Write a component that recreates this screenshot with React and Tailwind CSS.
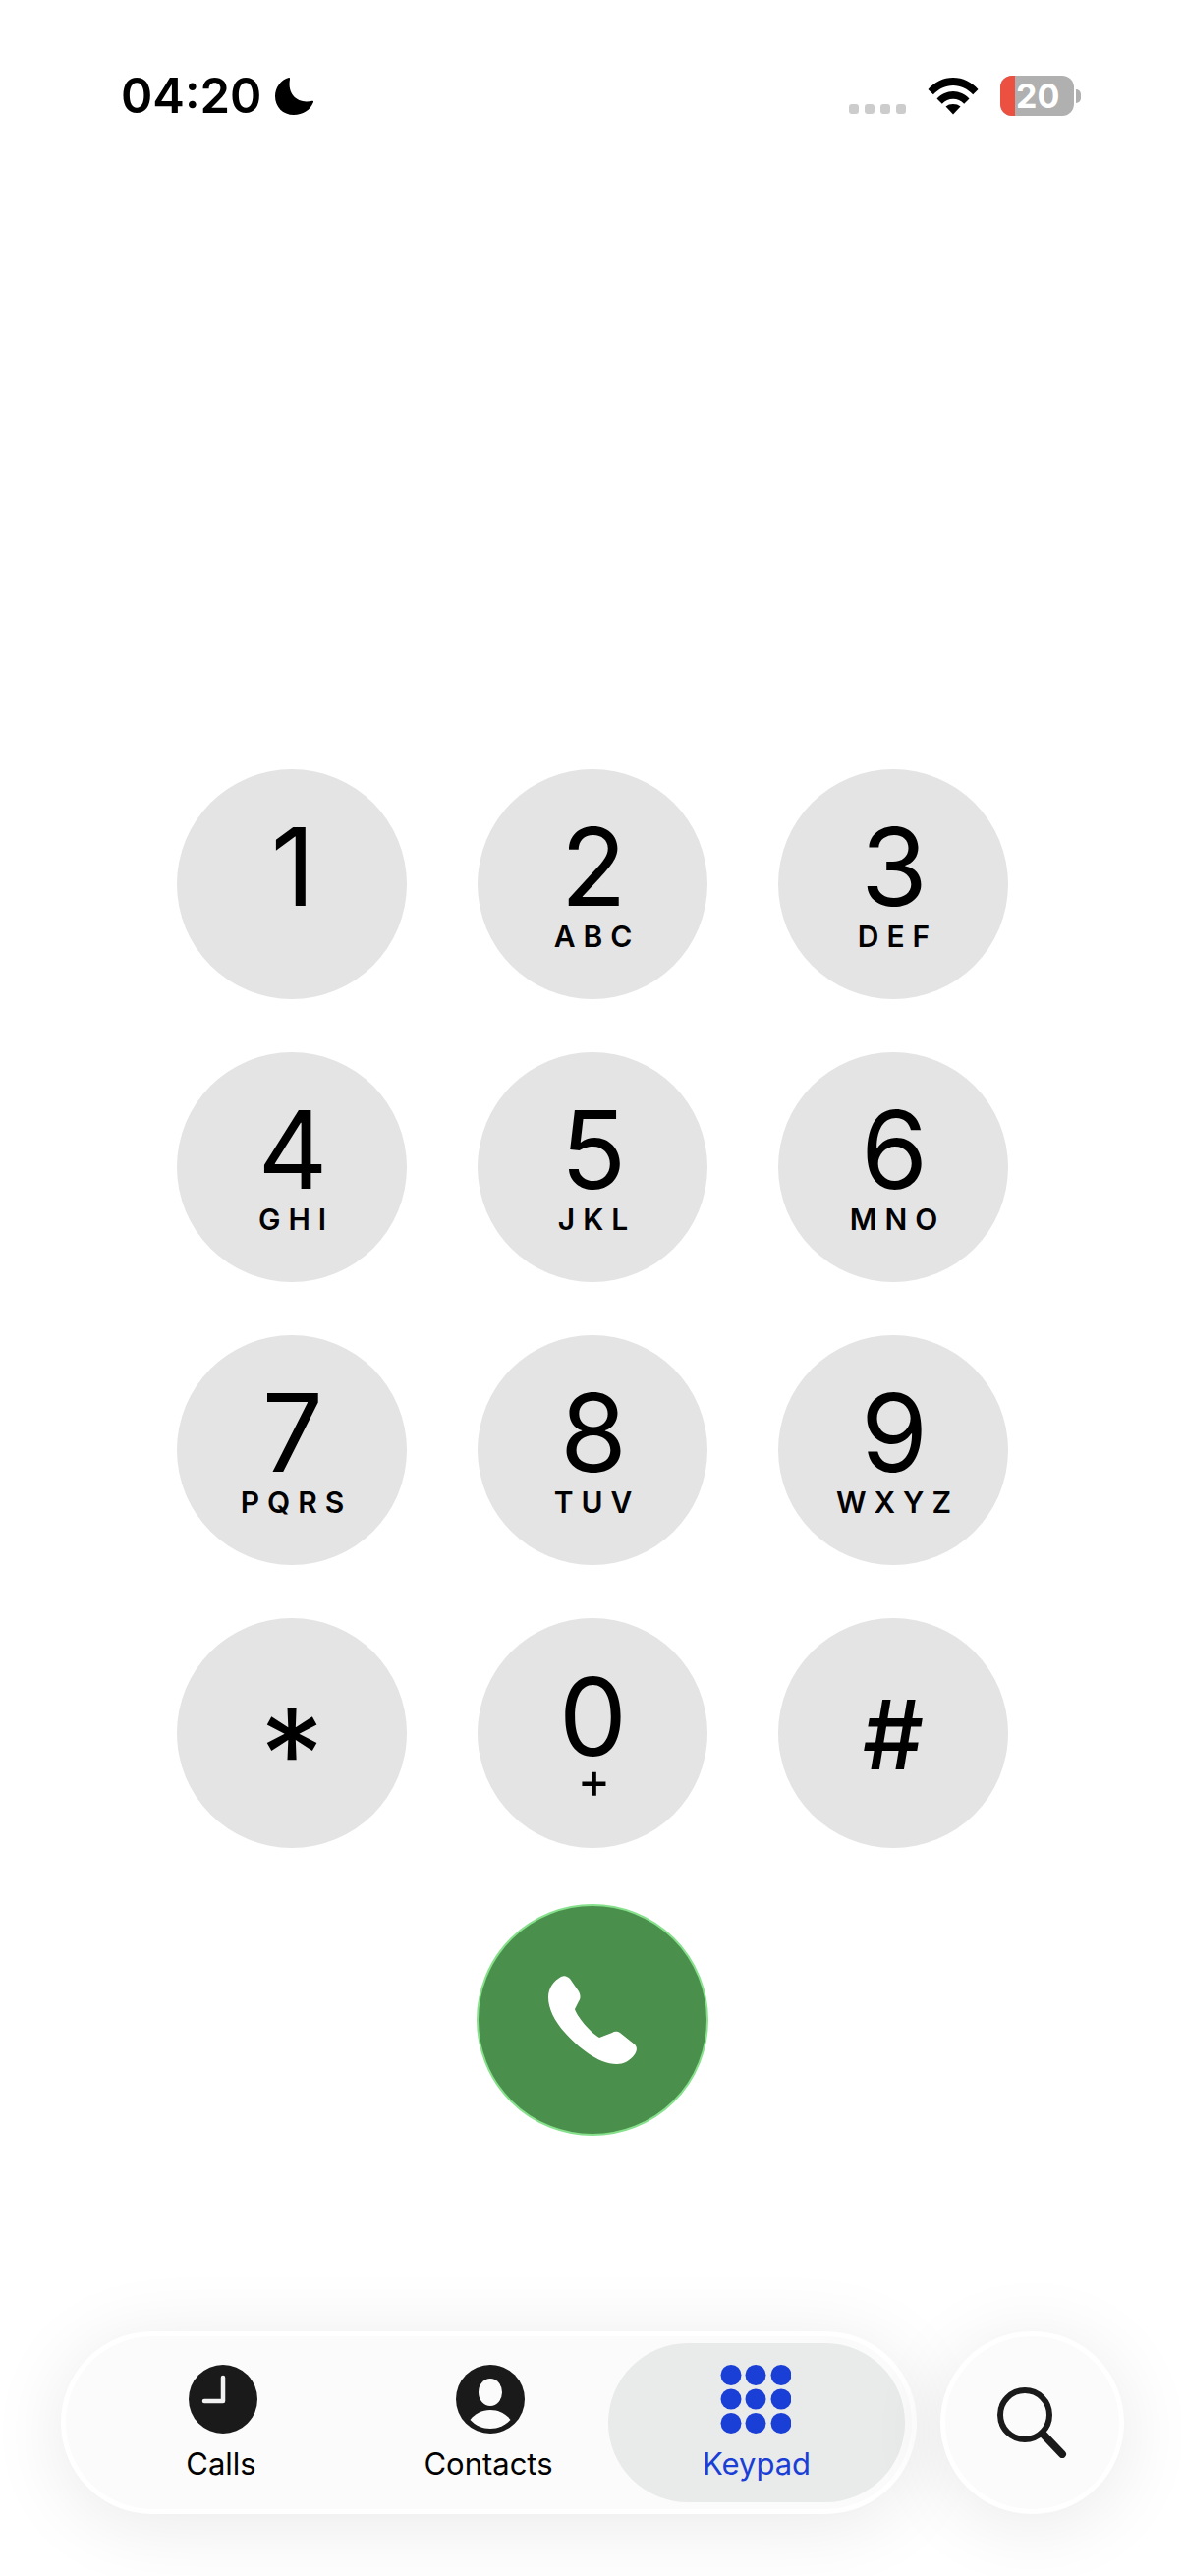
import React from 'react';

const keys = [
    { digit: '1', sub: '' },
    { digit: '2', sub: 'ABC' },
    { digit: '3', sub: 'DEF' },
    { digit: '4', sub: 'GHI' },
    { digit: '5', sub: 'JKL' },
    { digit: '6', sub: 'MNO' },
    { digit: '7', sub: 'PQRS' },
    { digit: '8', sub: 'TUV' },
    { digit: '9', sub: 'WXYZ' }
];

const Key = ({ digit, sub }) => (
    <button className="w-[234px] h-[234px] rounded-full bg-[#e4e4e4] flex flex-col items-center pt-[59px] text-black">
        <span className="pl-[2px] text-[110px] leading-[80px] font-normal">{digit}</span>
        {sub && (
            <span className="mt-[20px] pl-[9px] text-[30px] leading-[22px] font-semibold tracking-[8px]">{sub}</span>
        )}
    </button>
);

const Moon = () => (
    <svg width="40" height="40" viewBox="0 0 40 40" className="ml-[14px]">
        <path d="M14 1C6 3 0 11 0 20c0 11 8 19 19 19 9 0 17-5 20-13 .3-1-.5-1.500-1.500-1.300C25 28 12 20 15 2.500c.2-1-.3-1.700-1-1.500z" fill="#000" />
    </svg>
);

const Wifi = () => (
    <svg width="52" height="38" viewBox="0 0 52 38">
        <path d="M0.500 12C7 4.500 16 0 26 0s19 4.500 25.500 12l-5.300 5.300C40.800 11.500 33.800 8 26 8S11.200 11.500 5.800 17.300z" fill="#000" />
        <path d="M9.500 21.500C14 16.800 19.800 14 26 14s12 2.800 16.500 7.500l-5.300 5.300C34 23.300 30.300 21.800 26 21.800s-8 1.500-11.200 5z" fill="#000" />
        <path d="M18.500 29.500C20.500 27.800 23 27 26 27s5.500.8 7.500 2.500L26 37.500z" fill="#000" />
    </svg>
);

const PhoneGlyph = () => (
    <svg width="90" height="90" viewBox="0 0 90 90">
        <path d="M13 1C17-1 20 1 22 3L31 16C33 20 33 23 31 26L27 34C29 41 42 57 52 63L65 58C68 56 71 57 73 58L88 70C91 73 90 77 88 80C83 87 76 90 70 90C50 90 30 72 17 58C6 46 0 33 0 22C0 12 6 5 13 1Z" fill="#fff" />
    </svg>
);

const ClockIcon = () => (
    <svg width="70" height="70" viewBox="0 0 70 70" className="ml-[3px]">
        <circle cx="35" cy="35" r="35" fill="#1a1a1a" />
        <path d="M35 13V37H16" fill="none" stroke="#f2f2f2" strokeWidth="4.500" strokeLinecap="round" strokeLinejoin="round" />
    </svg>
);

const ContactIcon = () => (
    <svg width="70" height="70" viewBox="0 0 70 70" className="ml-[3px]">
        <circle cx="35" cy="35" r="35" fill="#1a1a1a" />
        <ellipse cx="35" cy="28" rx="12" ry="14" fill="#fbfbfb" />
        <path d="M14.500 56C19 50 26.500 46 35 46s16 4 20.500 10C50 62 43 65 35 65S20 62 14.500 56Z" fill="#fbfbfb" />
    </svg>
);

const KeypadIcon = () => (
    <svg width="72" height="70" viewBox="0 0 72 70" fill="#1a3fd6" className="mr-[2px]">
        <circle cx="11" cy="10.500" r="10.500" />
        <circle cx="36" cy="10.500" r="10.500" />
        <circle cx="62" cy="10.500" r="10.500" />
        <circle cx="11" cy="35" r="10.500" />
        <circle cx="36" cy="35" r="10.500" />
        <circle cx="62" cy="35" r="10.500" />
        <circle cx="11" cy="59.500" r="10.500" />
        <circle cx="36" cy="59.500" r="10.500" />
        <circle cx="62" cy="59.500" r="10.500" />
    </svg>
);

const SearchIcon = () => (
    <svg width="72" height="72" viewBox="0 0 72 72">
        <circle cx="28" cy="28" r="25" fill="none" stroke="#1a1a1a" strokeWidth="6" />
        <path d="M46 47L66 68" fill="none" stroke="#1a1a1a" strokeWidth="8" strokeLinecap="round" />
    </svg>
);

const TabLabel = ({ children, active }) => (
    <span className={active ? 'mt-[13px] text-[31px] leading-[36px] text-[#1a3fd6]' : 'mt-[13px] text-[31px] leading-[36px] text-black'}>
        {children}
    </span>
);

const App = () => {
    return (
        <div className="w-[1206px] h-[2622px] bg-white flex flex-col overflow-hidden [font-family:Inter,sans-serif]">
            {/* Status bar */}
            <div className="flex items-center justify-between h-[41px] mt-[77px] pl-[123px] pr-[106px]">
                <div className="flex items-center">
                    <span className="text-[49px] leading-[41px] font-semibold text-black">04:20</span>
                    <Moon />
                </div>
                <div className="flex items-center">
                    <div className="flex gap-[6px] mt-[26px]">
                        <div className="w-[10px] h-[10px] rounded-[3px] bg-[#cccccc]"></div>
                        <div className="w-[10px] h-[10px] rounded-[3px] bg-[#cccccc]"></div>
                        <div className="w-[10px] h-[10px] rounded-[3px] bg-[#cccccc]"></div>
                        <div className="w-[10px] h-[10px] rounded-[3px] bg-[#cccccc]"></div>
                    </div>
                    <div className="ml-[22px]">
                        <Wifi />
                    </div>
                    <div className="ml-[22px] relative flex items-center w-[75px] h-[41px] rounded-[12px] bg-[#b0b0b0] overflow-hidden">
                        <div className="w-[15px] h-full bg-[#ec5040]"></div>
                        <span className="ml-[1px] text-[34px] leading-[41px] font-bold text-white">20</span>
                    </div>
                    <div className="ml-[2px] w-[5px] h-[14px] rounded-r-full bg-[#b0b0b0]"></div>
                </div>
            </div>

            {/* Keypad */}
            <div className="mt-[665px] ml-[180px] grid grid-cols-[234px_234px_234px] gap-x-[72px] gap-y-[54px]">
                {keys.map((k) => (
                    <Key key={k.digit} digit={k.digit} sub={k.sub} />
                ))}
                <button className="w-[234px] h-[234px] rounded-full bg-[#e4e4e4] flex items-start justify-center text-black">
                    <span className="mt-[74px] text-[130px] leading-[130px] font-normal">*</span>
                </button>
                <button className="w-[234px] h-[234px] rounded-full bg-[#e4e4e4] flex flex-col items-center pt-[60px] text-black">
                    <span className="pl-[1px] text-[110px] leading-[80px] font-normal">0</span>
                    <span className="mt-[7px] pl-[3px] text-[50px] leading-[36px] font-medium">+</span>
                </button>
                <button className="w-[234px] h-[234px] rounded-full bg-[#e4e4e4] flex items-center justify-center text-black">
                    <span className="mt-[4px] text-[98px] leading-[98px] font-medium">#</span>
                </button>
            </div>

            {/* Call button */}
            <div className="mt-[57px] ml-[485px]">
                <button className="w-[236px] h-[236px] rounded-full bg-[#4a8f4b] border-2 border-[#86e08c] flex items-center justify-center">
                    <PhoneGlyph />
                </button>
            </div>

            {/* Bottom dock */}
            <div className="flex-1 mt-[199px] relative">
                <div className="flex gap-[24px] ml-[62px]">
                    <div className="w-[871px] h-[186px] rounded-full bg-[#fbfbfb] border-[5px] border-white shadow-[0_10px_80px_rgba(0,0,0,0.09)] flex items-center">
                        <div className="ml-[78px] w-[160px] flex flex-col items-center">
                            <ClockIcon />
                            <TabLabel>Calls</TabLabel>
                        </div>
                        <div className="ml-[92px] w-[200px] flex flex-col items-center">
                            <ContactIcon />
                            <TabLabel>Contacts</TabLabel>
                        </div>
                        <div className="ml-[22px] w-[302px] h-[162px] rounded-full bg-[#e9eaea] flex flex-col items-center justify-center">
                            <KeypadIcon />
                            <TabLabel active>Keypad</TabLabel>
                        </div>
                    </div>
                    <div className="w-[187px] h-[186px] rounded-full bg-[#fbfbfb] border-[5px] border-white shadow-[0_10px_80px_rgba(0,0,0,0.09)] flex items-center justify-center">
                        <SearchIcon />
                    </div>
                </div>
            </div>
        </div>
    );
};

export default App;
